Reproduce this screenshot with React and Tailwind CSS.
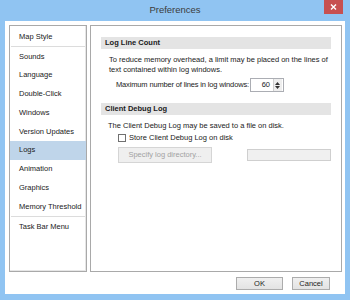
import React from 'react';

const items = [
  'Sounds',
  'Language',
  'Double-Click',
  'Windows',
  'Version Updates',
  'Logs',
  'Animation',
  'Graphics',
  'Memory Threshold',
];

function ListItem({ label, selected }) {
  return (
    <div
      className={`h-[18.75px] flex items-center pl-[9px] ${selected ? 'bg-[#bfd5ea]' : ''}`}
    >
      {label}
    </div>
  );
}

function Button({ children, className = '' }) {
  return (
    <button
      className={`h-[13px] border border-[#acacac] bg-gradient-to-b from-[#f0f0f0] to-[#e3e3e3] text-[#222] flex items-center justify-center ${className}`}
    >
      {children}
    </button>
  );
}

export default function App() {
  return (
    <div
      className="w-[350px] h-[300px] bg-[#90c4f2] flex flex-col text-[7.5px] text-[#1a1a1a] leading-none"
      style={{ fontFamily: '"Liberation Sans", Arial, sans-serif' }}
    >
      {/* Title bar */}
      <div className="h-[21px] relative flex items-center justify-center shrink-0">
        <span className="text-[9.5px] text-[#3c3c3c] -mt-[2px]">Preferences</span>
        <div className="absolute right-[7px] top-0 w-[19px] h-[14px] bg-[#c75050] flex items-center justify-center">
          <svg width="7" height="6" viewBox="0 0 7 6">
            <path d="M1 0.5 L6 5.5 M6 0.5 L1 5.5" stroke="white" strokeWidth="1.4" />
          </svg>
        </div>
      </div>

      {/* Client area */}
      <div className="flex-1 bg-white ml-[5px] mr-[5px] mb-[6px] flex flex-col pt-[4px] pl-[4px] pr-[3px]">
        <div className="flex gap-[3px] h-[247px]">
          {/* Left list */}
          <div className="w-[78px] border border-[#a9a9a9] shadow-[inset_-1px_-1px_0_#e6e6e6] flex flex-col">
            <div className="h-[19px] flex items-center pl-[9px] mt-[1px]">Map Style</div>
            <div className="h-px bg-[#dcdcdc] mx-[1px]" />
            {items.map((it) => (
              <ListItem key={it} label={it} selected={it === 'Logs'} />
            ))}
            <div className="h-px bg-[#dcdcdc] mx-[1px]" />
            <div className="h-[19px] flex items-center pl-[9px]">Task Bar Menu</div>
          </div>

          {/* Right panel */}
          <div className="flex-1 border border-[#a9a9a9] px-[10px] pt-[11px] flex flex-col">
            <div className="h-[12px] bg-[#e4e4e4] flex items-center pl-[4px] font-bold">
              Log Line Count
            </div>
            <div className="pl-[8px] mt-[6px] leading-[10px]">
              <div>To reduce memory overhead, a limit may be placed on the lines of</div>
              <div>text contained within log windows.</div>
            </div>
            <div className="flex items-center mt-[3px] pl-[15px]">
              <span className="pr-[1px] tracking-[-0.15px]">Maximum number of lines in log windows:</span>
              <div className="w-[34px] h-[14px] border border-[#abadb3] flex items-center justify-end bg-white">
                <span className="pr-[3px]">60</span>
                <div className="w-[9px] h-[12px] border-l border-[#d0d0d0] bg-[#eeeeee] flex flex-col items-center justify-center gap-[1px] mr-[1px]">
                  <svg width="5" height="3" viewBox="0 0 5 3">
                    <path d="M0 3 L2.5 0 L5 3 Z" fill="#333" />
                  </svg>
                  <svg width="5" height="3" viewBox="0 0 5 3">
                    <path d="M0 0 L2.5 3 L5 0 Z" fill="#333" />
                  </svg>
                </div>
              </div>
            </div>

            <div className="h-[12px] bg-[#e4e4e4] flex items-center pl-[4px] font-bold mt-[11px]">
              Client Debug Log
            </div>
            <div className="pl-[7px] mt-[6px] leading-[10px]">
              The Client Debug Log may be saved to a file on disk.
            </div>
            <div className="flex items-center pl-[17px] mt-[2px] h-[10px]">
              <div className="w-[8px] h-[8px] border border-[#707070] bg-white mr-[3px]" />
              <span>Store Client Debug Log on disk</span>
            </div>
            <div className="flex items-center pl-[17px] mt-[4px]">
              <div className="w-[94px] h-[16px] border border-[#d5d5d5] bg-[#efefef] text-[#a2a2a2] flex items-center justify-center">
                Specify log directory...
              </div>
              <div className="ml-auto w-[84px] h-[12px] border border-[#cfcfcf] bg-[#f0f0f0]" />
            </div>
          </div>
        </div>

        {/* Footer buttons */}
        <div className="flex justify-end gap-[9px] mt-[5px] pr-[12px]">
          <Button className="w-[47px]">OK</Button>
          <Button className="w-[38px]">Cancel</Button>
        </div>
      </div>
    </div>
  );
}
